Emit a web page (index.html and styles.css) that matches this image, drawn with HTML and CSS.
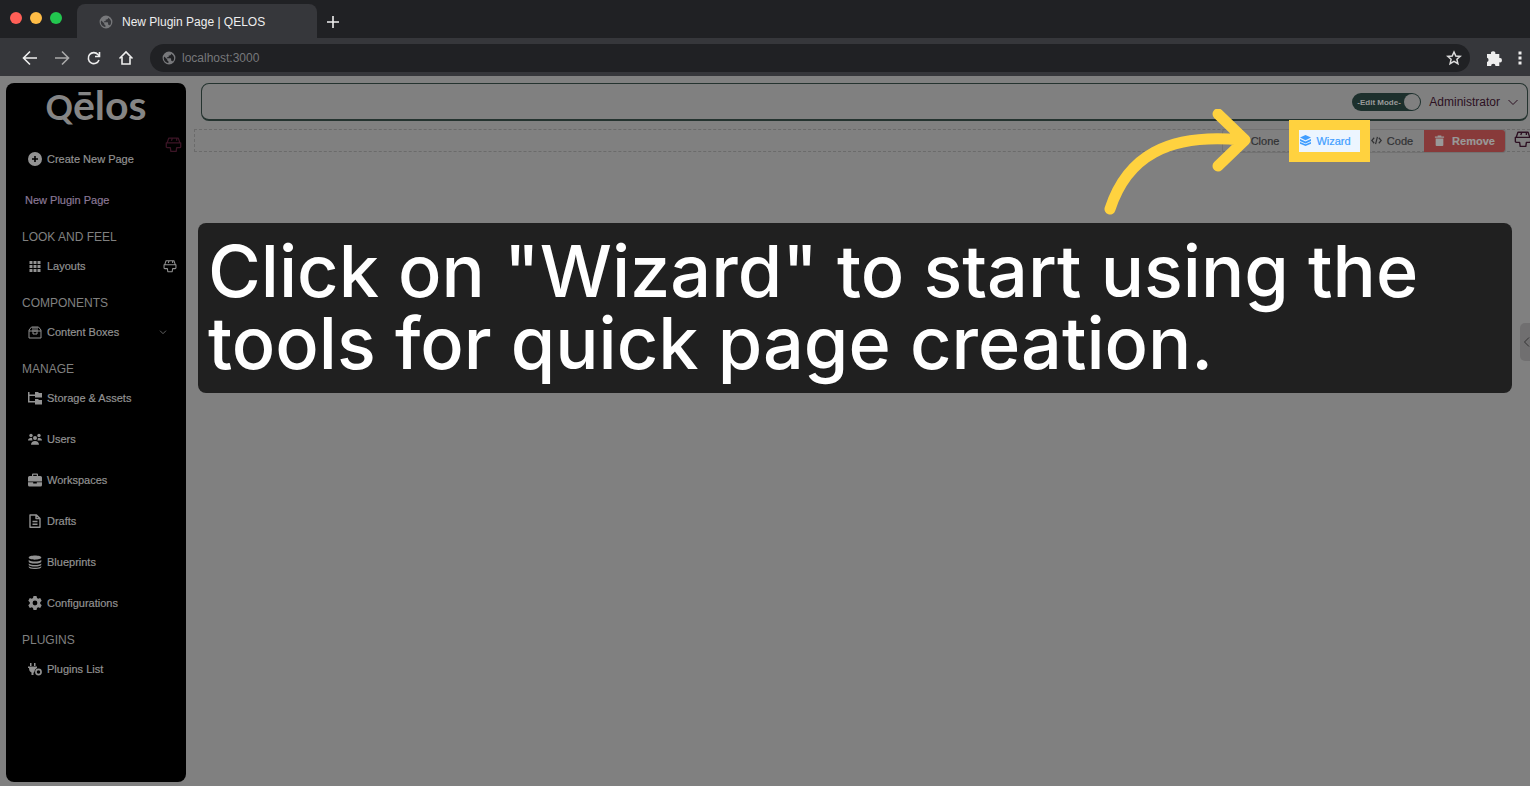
FILE: index.html
```html
<!DOCTYPE html>
<html lang="en">
<head>
  <meta charset="utf-8">
  <title>New Plugin Page | QELOS</title>
  <link rel="stylesheet" href="styles.css">
</head>
<body>
  <svg class="defs" width="0" height="0" aria-hidden="true">
    <symbol id="globe" viewBox="0 0 24 24"><path fill="currentColor" d="M12 1a11 11 0 1 0 0 22 11 11 0 0 0 0-22zm-2 19.500c-4-1-7-4.500-7-8.500l1-2.500 5 5v1c0 1 .8 2 2 2v3zM18.600 18c-.3-1-1-1.500-2-1.500h-1v-3c0-.6-.4-1-1-1H8.500v-2h2c.6 0 1-.4 1-1v-2h2c1.100 0 2-.9 2-2v-.8c5.500 2.500 7 9 3.100 13.300z"/></symbol>
    <symbol id="brush" viewBox="0 0 16 16"><path fill="none" stroke="currentColor" stroke-width="1.200" stroke-linejoin="round" d="M3.500 2h9l1.500 4.500H2zM1.200 6.500h13.600V10q0 1-1 1H11l-.5 3.500h-5L5 11H2.200q-1 0-1-1zM7 2l-1 2.500M11 2v2.500"/></symbol>
    <symbol id="down" viewBox="0 0 12 12"><path fill="none" stroke="currentColor" d="M1.500 4 6 8.500 10.500 4"/></symbol>
  </svg>

  <div class="tabs">
    <div class="dots"><span class="red"></span><span class="yellow"></span><span class="green"></span></div>
    <div class="tab"><svg class="globe"><use href="#globe"/></svg>New Plugin Page | QELOS</div>
    <button type="button" class="new-tab" aria-label="New tab"><svg width="12" height="12" viewBox="0 0 12 12"><path d="M6 0v12M0 6h12" stroke="#eee" stroke-width="1.600"/></svg></button>
  </div>

  <div class="toolbar">
    <button type="button" aria-label="Back"><svg viewBox="0 0 16 16"><path d="M15 8H2M8 1.500 1.500 8 8 14.500"/></svg></button>
    <button type="button" class="dim" aria-label="Forward"><svg viewBox="0 0 16 16"><path d="M1 8h13M8 1.500 14.500 8 8 14.500"/></svg></button>
    <button type="button" aria-label="Reload"><svg viewBox="0 0 16 16"><path d="M13 10A5.500 5.500 0 1 1 12 4.500L13.500 6M13.500 2V6.500H9"/></svg></button>
    <button type="button" aria-label="Home"><svg viewBox="0 0 16 16"><path d="M1.500 8.500 8 2l6.500 6.500M4 7v7h8V7"/></svg></button>
    <div class="address">
      <svg class="globe"><use href="#globe"/></svg>
      <input type="text" value="localhost:3000" aria-label="Address">
      <svg class="star" viewBox="0 0 16 16"><path fill="none" stroke="#ddd" stroke-width="1.500" d="M8 2l1.800 4 4.400.4-3.300 2.900 1 4.300L8 11.300l-3.900 2.300 1-4.300-3.300-2.900 4.400-.4z"/></svg>
    </div>
    <button type="button" aria-label="Extensions"><svg viewBox="0 0 16 16"><path class="solid" d="M1 4h4a2.200 2.200 0 1 1 4.300 0h4v4a2.200 2.200 0 1 1 0 4.300V16H9.500a2.200 2.200 0 0 0-4.400 0H1v-4a2.200 2.200 0 0 0 0-4.200z"/></svg></button>
    <button type="button" class="more" aria-label="Menu"><svg viewBox="0 0 4 16"><path class="solid" d="M.5 1.500h3v3h-3zM.5 6.500h3v3h-3zM.5 11.500h3v3h-3z"/></svg></button>
  </div>

  <div class="app">
    <aside class="sidebar">
      <div class="logo"><span>Q</span>ēlos</div>
      <nav>
        <a href="#" class="item create">
          <svg viewBox="0 0 14 14"><path fill="currentColor" fill-rule="evenodd" d="M7 0a7 7 0 1 0 0 14A7 7 0 0 0 7 0zM6.200 4h1.600v2.200H10v1.600H7.800V10H6.200V7.800H4V6.200h2.200z"/></svg>
          Create New Page
          <svg class="edit pink"><use href="#brush"/></svg>
        </a>
        <a href="#" class="item current">New Plugin Page</a>

        <h2>LOOK AND FEEL</h2>
        <a href="#" class="item">
          <svg viewBox="0 0 14 14"><path fill="currentColor" d="M1.500 2h3v3h-3zM5.500 2h3v3h-3zM9.500 2h3v3h-3zM1.500 6h3v3h-3zM5.500 6h3v3h-3zM9.500 6h3v3h-3zM1.500 10h3v3h-3zM5.500 10h3v3h-3zM9.500 10h3v3h-3z"/></svg>
          Layouts
          <svg class="edit"><use href="#brush"/></svg>
        </a>

        <h2>COMPONENTS</h2>
        <a href="#" class="item">
          <svg viewBox="0 0 14 14"><path fill="none" stroke="currentColor" d="M3.500 2h7L13 5v8H1V5zM1 6h12M5 2v7h4V2M7 2v5"/></svg>
          Content Boxes
          <svg class="arrow"><use href="#down"/></svg>
        </a>

        <h2>MANAGE</h2>
        <a href="#" class="item">
          <svg viewBox="0 0 14 14"><path fill="currentColor" d="M0 1h1.500v2.500H7V1h3l1 1h3v4.500H7V5H1.500v5H7V8h3l1 1h3v4.500H7v-2H0z"/></svg>
          Storage &amp; Assets
        </a>
        <a href="#" class="item">
          <svg viewBox="0 0 14 14"><g fill="currentColor"><circle cx="3" cy="3.500" r="1.700"/><circle cx="11" cy="3.500" r="1.700"/><circle cx="7" cy="6" r="2"/><path d="M0 8.500C0 6.500 1.500 6 4 6l.5 2.500zM14 8.500C14 6.500 12.500 6 10 6l-.5 2.500zM3 12.800c0-2.500 1.500-3.800 4-3.800s4 1.300 4 3.800z"/></g></svg>
          Users
        </a>
        <a href="#" class="item">
          <svg viewBox="0 0 14 14"><path fill="currentColor" fill-rule="evenodd" d="M4 3V1.500Q4 .5 5 .5h4q1 0 1 1V3h2.500Q14 3 14 4.500V8.500H0V4.500Q0 3 1.500 3zM5.200 3h3.600V1.700H5.200zM0 9.300h5.200v1.200h3.600V9.300H14v2.700q0 1.500-1.500 1.500h-11Q0 13.500 0 12z"/></svg>
          Workspaces
        </a>
        <a href="#" class="item">
          <svg viewBox="0 0 14 14"><path fill="none" stroke="currentColor" stroke-width="1.400" stroke-linejoin="round" d="M3 1h5.500l3.500 3.500V13.300H2V1zM8 1v3.500h4M4.500 7.500h5M4.500 10.300h5"/></svg>
          Drafts
        </a>
        <a href="#" class="item">
          <svg viewBox="0 0 14 14"><path fill="currentColor" d="M.7 2.500C.7-.2 13.300-.2 13.300 2.500S.7 5.500.7 2.500zM.7 5c3 2 9.600 2 12.600 0v1.500c0 2.700-12.600 2.700-12.600 0zM.7 8.500c3 2 9.600 2 12.600 0V9.500c0 2.700-12.600 2.700-12.600 0zM.7 11.300c3 2 9.600 2 12.600 0v.7c0 2.700-12.600 2.700-12.600 0z"/></svg>
          Blueprints
        </a>
        <a href="#" class="item">
          <svg viewBox="0 0 14 14"><path fill="currentColor" fill-rule="evenodd" d="M5.500 0h3l.5 2 1.200.7 2-.6 1.500 2.600L12.200 6.200v1.600l1.500 1.500-1.500 2.600-2-.6L9 12l-.5 2h-3L5 12l-1.200-.7-2 .6L.3 9.300l1.500-1.500V6.200L.3 4.700l1.500-2.600 2 .6L5 2zM7 4.600a2.400 2.400 0 1 0 0 4.800 2.400 2.400 0 0 0 0-4.800z"/></svg>
          Configurations
        </a>

        <h2>PLUGINS</h2>
        <a href="#" class="item">
          <svg viewBox="0 0 14 14"><path fill="currentColor" d="M2 1h1.500v3H2zM6 1h1.500v3H6zM0 4.500h9V6Q6.500 7 6.300 10L5.500 11v2h-2v-2.500Q1 9.500 1 6H0z"/><circle cx="10.500" cy="10" r="2.600" fill="none" stroke="currentColor" stroke-width="1.600"/></svg>
          Plugins List
        </a>
      </nav>
    </aside>

    <main>
      <header class="topbar">
        <label class="switch"><input type="checkbox" role="switch" checked><span>-Edit Mode-</span></label>
        <button type="button" class="user">Administrator<svg><use href="#down"/></svg></button>
      </header>

      <div class="actions">
        <div class="group">
          <button type="button" class="clone">Clone</button>
          <button type="button" class="wizard"><svg viewBox="0 0 12 12"><path fill="currentColor" d="M6 0l6 2.800-6 2.800L0 2.800zM0 4.300l6 2.700 6-2.700v2.200L6 9.200 0 6.500zM0 7.700l6 2.500 6-2.500v1.800L6 12 0 9.500z"/></svg>Wizard</button>
          <button type="button" class="code"><svg viewBox="0 0 12 12"><path fill="none" stroke="currentColor" stroke-width="1.300" d="M3.500 3 .8 6l2.700 3M8.500 3l2.700 3-2.700 3M7 2 5 10"/></svg>Code</button>
          <button type="button" class="remove"><svg viewBox="0 0 12 12"><path fill="currentColor" d="M1 1.500h3V.5h4v1h3V3H1zM1.800 3.800h8.400V11q0 1-1 1H2.800q-1 0-1-1z"/></svg>Remove</button>
        </div>
        <svg class="edit"><use href="#brush"/></svg>
      </div>

      <p class="caption">Click on "Wizard" to start using the tools for quick page creation.</p>
    </main>
    <button type="button" class="drawer" aria-label="Open panel"><svg viewBox="0 0 10 12"><path fill="none" stroke="#333" d="M9 1.500 4.500 6 9 10.500"/></svg></button>
    <svg class="pointer" viewBox="0 0 152 110"><path fill="none" stroke="#ffd23f" stroke-width="11" stroke-linecap="round" stroke-linejoin="round" d="M9 100C26 48 66 24 140 31M117 5 144 31 117 57"/></svg>
  </div>
</body>
</html>
```
FILE: styles.css
```css
* {
  box-sizing: border-box;
}

body {
  margin: 0;
  min-height: 100vh;
  display: flex;
  flex-direction: column;
  overflow: hidden;
  background: #808080;
  font-family: "Liberation Sans", Arial, sans-serif;
  font-size: 11px;
}

button {
  display: flex;
  align-items: center;
  padding: 0;
  border: 0;
  background: none;
  color: inherit;
  font: inherit;
}

svg {
  flex: none;
}

.defs {
  position: absolute;
}

/* browser window */
.tabs {
  display: flex;
  height: 38px;
  background: #202124;
}

.dots {
  display: flex;
  gap: 8px;
  width: 77px;
  padding: 12px 10px;
}

.dots span {
  width: 12px;
  height: 12px;
  border-radius: 50%;
}

.red {
  background: #ff5f57;
}

.yellow {
  background: #febc46;
}

.green {
  background: #22c64f;
}

.tab {
  display: flex;
  align-items: center;
  gap: 9px;
  width: 240px;
  margin-top: 4px;
  padding: 2px 22px 0 22px;
  border-radius: 8px 8px 0 0;
  background: #36373b;
  color: #eee;
  font-size: 12px;
}

.globe {
  width: 14px;
  height: 14px;
  color: #77787b;
}

.new-tab {
  margin: 6px 0 0 10px;
}

.toolbar {
  display: flex;
  align-items: center;
  gap: 16px;
  height: 38px;
  padding: 2px 0 0 22px;
  background: #36373b;
}

.toolbar button svg {
  width: 16px;
  height: 16px;
  fill: none;
  stroke: #eee;
  stroke-width: 1.6px;
}

.toolbar .dim svg {
  stroke: #aaa;
}

.toolbar .solid {
  fill: #eee;
  stroke: none;
}

.toolbar .more svg {
  width: 4px;
}

.toolbar .more {
  width: 12px;
}

.address {
  display: flex;
  flex: 1;
  align-items: center;
  gap: 6px;
  height: 28px;
  padding: 0 8px 0 12px;
  border-radius: 14px;
  background: #202124;
}

.address input {
  flex: 1;
  padding: 0;
  border: 0;
  background: none;
  color: #77787b;
  font: inherit;
  font-size: 12px;
}

.star {
  width: 16px;
  height: 16px;
}

/* application */
.app {
  position: relative;
  display: flex;
  flex: 1;
  gap: 8px;
  padding: 7px 0 4px 6px;
}

.sidebar {
  width: 180px;
  border-radius: 8px;
  background: #000;
  color: #929292;
}

.logo {
  height: 55px;
  color: #858585;
  font: bold 41px/44px Lato, sans-serif;
  text-align: center;
}

.logo span {
  font-size: 34px;
}

.item {
  display: flex;
  align-items: center;
  gap: 5px;
  height: 41px;
  padding: 0 9px 0 22px;
  color: inherit;
  text-decoration: none;
  -webkit-text-stroke: 0.2px;
}

.item > svg {
  width: 14px;
  height: 14px;
}

.item .edit {
  margin-left: auto;
}

.item .pink {
  width: 17px;
  height: 17px;
  margin: -28px -5px 0 auto;
  color: #3c1526;
}

.item .arrow {
  width: 8px;
  height: 8px;
  margin: 0 10px 0 auto;
}

.current {
  padding-left: 19px;
  color: #8a7896;
}

h2 {
  margin: 0;
  padding: 9px 16px 0;
  color: #808080;
  font-size: 12px;
  font-weight: normal;
  line-height: 16px;
}

main {
  flex: 1;
  min-width: 0;
}

.topbar {
  display: flex;
  align-items: center;
  justify-content: flex-end;
  gap: 8px;
  height: 38px;
  margin: 0 2px 0 7px;
  padding: 1px 8px 0 0;
  border: 1px solid #24332f;
  border-bottom-width: 2px;
  border-radius: 8px;
}

.switch {
  display: flex;
  align-items: center;
  width: 69px;
  height: 18px;
  padding-left: 5px;
  border-radius: 9px;
  background: #1d302d;
  color: #9a9a9a;
  font-size: 8px;
  font-weight: bold;
}

.switch input {
  order: 1;
  flex: none;
  width: 16px;
  height: 16px;
  margin: 0 1px 0 auto;
  appearance: none;
  border-radius: 50%;
  background: #808080;
}

.switch span {
  white-space: nowrap;
}

.user {
  gap: 7px;
  color: #2c1022;
  font-size: 12px;
}

.user svg {
  width: 12px;
  height: 12px;
}

.actions {
  display: flex;
  align-items: center;
  justify-content: flex-end;
  gap: 8px;
  height: 23px;
  margin-top: 8px;
  border: 1px dashed #6b6b6b;
  border-right: 0;
}

.group {
  display: flex;
  width: 284px;
  border: 1px solid #727272;
  border-radius: 3px;
}

.group button {
  justify-content: center;
  gap: 5px;
  height: 22px;
  color: #303133;
  -webkit-text-stroke: 0.2px;
}

.group svg {
  width: 11px;
  height: 11px;
}

.group .clone {
  width: 76px;
  padding-left: 8px;
}

.group .wizard {
  position: relative;
  width: 61px;
  padding-right: 8px;
  background: #ecf5ff;
  box-shadow: 0 0 0 10px #ffd23f;
  color: #409eff;
}

.group .code {
  flex: 1;
}

.group .remove {
  gap: 7px;
  width: 81px;
  border-radius: 0 3px 3px 0;
  background: #883a3a;
  color: #999;
  font-weight: bold;
}

.actions .edit {
  width: 18px;
  height: 18px;
  margin: -4px -2px 0 0;
  color: #2c1022;
}

.caption {
  margin: 71px 18px 0 4px;
  padding: 12px 10px 14px;
  border-radius: 8px;
  background: #202020;
  color: #fff;
  font: 500 72px/72px Inter, sans-serif;
}

/* things floating above the page */
.drawer {
  position: absolute;
  top: 247px;
  right: 0;
  width: 10px;
  height: 38px;
  border-radius: 5px 0 0 5px;
  background: #706f70;
}

.drawer svg {
  width: 10px;
  height: 12px;
}

.pointer {
  position: absolute;
  top: 33px;
  right: 277px;
  width: 152px;
  height: 110px;
}
```
